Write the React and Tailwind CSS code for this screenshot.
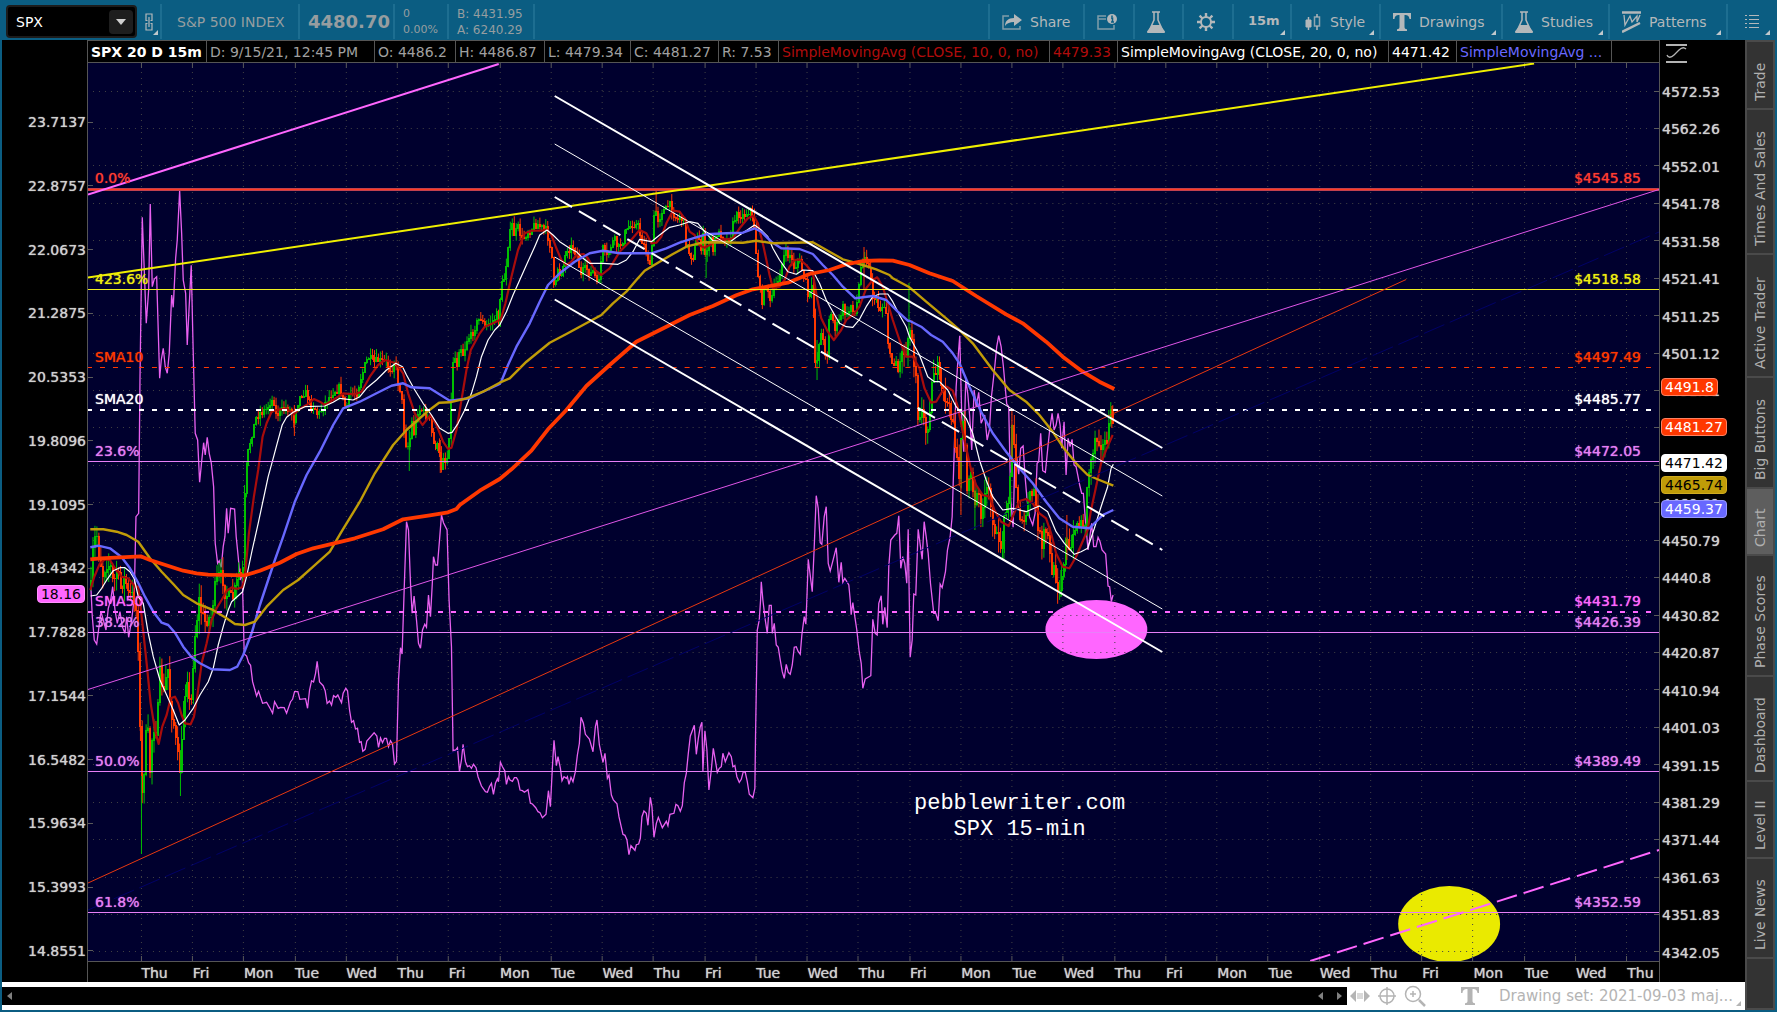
// Plot area in chart units
const PLOT = { x: 88, y: 63, w: 1572, h: 898 }

// Series are recorded in panes: [originX, originY, x, y, x, y, ...], three steps to a chart unit
const toPoints = panes =>
  panes.flatMap(([ox, oy, ...v]) => {
    const out = []
    for (let i = 0; i < v.length; i += 2) out.push([ox + v[i] / 3, oy + v[i + 1] / 3])
    return out
  })

const toLine = panes => toPoints(panes).map(([x, y]) => `${x.toFixed(1)},${y.toFixed(1)}`).join(' ')

const VIX = [
  [0, 580, 272, 10, 277, 110, 283, 180, 290, 192, 297, 140, 303, 95, 310, 120, 318, 150, 325, 85, 332, 60, 338, 20, 345, 90, 352, 130, 360, 95, 367, 140, 375, 160, 380, 110, 386, 172, 395, 120, 402, 60],
  [0, 180, 404, 1190, 408, 1010, 416, 1000, 420, 600, 427, 112, 439, 430, 446, 330, 451, 72, 457, 320, 463, 297, 470, 290, 479, 595, 484, 540, 490, 505, 496, 560, 502, 580, 508, 520, 515, 345, 520, 382, 527, 235, 532, 180, 539, 32, 545, 160, 550, 300, 557, 340, 562, 495, 574, 256, 580, 520, 586, 760, 593, 780, 599, 907, 605, 845, 611, 788, 616, 825, 622, 772, 628, 820, 634, 848, 641, 920, 646, 1090, 653, 1150, 658, 1142, 664, 1162, 670, 1100, 675, 1070, 680, 985, 685, 1060, 692, 985, 704, 987, 709, 1070, 715, 1130, 721, 1200, 727, 1180, 729, 1260],
  [0, 580, 733, 222, 740, 228, 746, 248, 752, 256, 758, 305, 770, 348, 776, 334, 788, 370, 800, 367, 812, 388, 818, 400, 824, 365, 835, 385, 842, 382, 853, 383, 860, 400, 872, 365, 878, 358, 884, 335, 894, 335, 900, 358, 917, 356, 923, 385, 929, 330, 935, 302, 941, 306, 947, 280, 952, 244, 959, 306, 970, 317, 976, 332, 982, 370, 989, 363, 995, 375, 1001, 347, 1008, 352, 1014, 345, 1019, 356, 1025, 368, 1030, 340, 1038, 325, 1043, 332, 1049, 390, 1055, 427, 1061, 422, 1067, 447, 1073, 445, 1079, 487, 1084, 485, 1089, 514, 1096, 508, 1101, 483, 1123, 458, 1131, 468, 1136, 502, 1142, 474, 1148, 488, 1154, 475, 1160, 475, 1166, 500, 1172, 482, 1178, 492, 1184, 552, 1190, 543, 1196, 300, 1202, 203, 1207, 222, 1214, 0],
  [0, 180, 1220, 1025, 1226, 1050, 1231, 1180],
  [0, 580, 1232, 10, 1237, 100, 1243, 48, 1250, 120, 1256, 190, 1262, 205, 1268, 150, 1275, 133, 1280, 142, 1286, 45, 1292, 110, 1298, 0],
  [0, 180, 1301, 1130, 1307, 1155, 1313, 1155, 1320, 1070, 1325, 1005, 1331, 1028, 1342, 1050, 1348, 1260],
  [400, 600, 155, 140, 160, 452, 168, 450, 173, 443, 179, 515, 185, 480, 190, 433, 197, 485, 203, 500, 209, 497, 215, 505, 221, 493, 229, 503, 235, 530, 245, 558, 257, 575, 263, 577, 269, 560, 275, 550, 281, 583, 287, 550, 293, 536, 296, 545, 302, 487, 308, 500, 315, 512, 320, 553, 326, 530, 331, 540, 338, 544, 344, 533, 350, 533, 355, 541, 361, 570, 368, 572, 374, 577, 385, 569, 392, 610, 398, 612, 408, 623, 415, 635, 421, 638, 428, 653, 439, 643, 446, 572, 452, 620, 458, 500, 463, 421, 470, 497, 475, 470, 482, 505, 487, 542, 493, 530, 500, 535, 503, 530, 508, 553, 514, 532, 520, 545, 527, 515, 533, 465, 539, 430, 544, 352, 551, 370, 557, 403, 569, 417, 580, 455, 587, 380, 592, 360, 599, 435, 610, 487, 616, 460, 623, 535, 628, 525, 635, 585, 641, 600, 652, 611, 658, 650, 670, 703, 676, 706, 682, 720, 688, 764, 694, 737, 706, 751, 710, 734, 717, 732, 722, 715, 727, 650, 733, 633, 740, 640, 745, 676, 752, 592, 757, 620, 763, 712, 770, 670, 776, 652, 788, 683, 800, 664, 805, 677, 811, 643, 823, 640, 829, 613, 835, 617, 842, 634, 848, 617, 854, 548, 860, 520, 866, 460, 872, 408, 878, 392, 884, 376, 890, 463, 896, 415, 902, 380, 907, 367, 910, 513, 916, 392, 922, 450, 928, 570, 935, 510, 941, 445, 947, 480, 953, 517, 959, 505, 965, 500, 970, 460, 977, 485, 988, 458, 995, 470, 1000, 500, 1006, 497, 1012, 530, 1019, 547, 1025, 538, 1031, 515, 1037, 517, 1043, 545, 1049, 583, 1060, 593, 1066, 565, 1068, 400, 1073, 90, 1079, 60, 1083, 0],
  [460, 180, 905, 1205, 910, 1260],
  [400, 600, 1097, 60, 1103, 100, 1109, 16, 1115, 16, 1118, 100, 1124, 70, 1130, 135, 1136, 142, 1142, 180, 1148, 215, 1154, 235, 1160, 193, 1166, 217, 1172, 223, 1178, 195, 1184, 142, 1190, 140, 1196, 155, 1202, 163, 1207, 105, 1214, 50, 1219, 72, 1222, 0],
  [460, 180, 1046, 1138, 1058, 1235, 1064, 1100, 1070, 947, 1076, 985, 1082, 1088, 1087, 1093, 1094, 1010, 1100, 980, 1106, 1150, 1112, 1173, 1118, 1150, 1130, 1103, 1138, 1207, 1145, 1147, 1150, 1207, 1156, 1195, 1168, 1215, 1172, 1260],
  [400, 600, 1355, 44, 1360, 8, 1366, 50, 1372, 90, 1379, 155, 1385, 190, 1390, 265, 1397, 237, 1414, 227, 1420, 58],
  [860, 200, 47, 1300, 53, 1305, 58, 1210, 65, 1187, 70, 1273, 76, 1222, 83, 1283, 88, 1100, 94, 1020, 106, 1005, 112, 1000, 118, 947, 124, 1105, 130, 1070, 136, 1090, 142, 1150, 146, 988, 152, 1372, 158, 1320, 163, 1182, 169, 1185, 176, 988, 188, 1078, 194, 965, 200, 1010, 206, 1060, 213, 1150, 223, 1240, 229, 1240, 236, 1262, 242, 1152, 248, 1163, 258, 1115, 264, 1050, 272, 1010, 278, 950, 284, 760, 290, 560, 296, 470, 301, 407, 307, 650, 313, 755, 319, 540, 325, 580, 331, 650, 337, 750, 344, 570, 350, 620, 358, 577, 365, 670, 376, 645, 383, 720, 390, 690, 396, 590, 405, 510, 412, 440, 418, 407, 425, 440, 432, 500, 442, 612, 448, 620, 454, 900, 461, 982, 466, 790, 472, 770, 478, 823, 484, 745, 491, 738, 497, 830, 503, 900, 510, 950, 520, 975, 527, 940, 533, 790, 538, 785, 544, 700, 550, 812, 558, 817, 566, 735, 571, 690, 578, 640, 584, 690, 590, 675, 596, 640, 602, 675, 607, 745, 614, 665, 620, 825, 626, 715, 632, 740, 638, 718, 644, 795, 650, 800, 656, 830, 661, 855, 667, 880, 672, 880, 678, 960, 686, 1050, 697, 970, 703, 1040, 710, 1040, 716, 1012, 722, 1025, 728, 1050, 739, 1062, 746, 1158, 751, 1160, 756, 1205, 761, 1185],
]

const SMA10 = [
  [0, 180, 271, 1230, 283, 1190, 300, 1150, 315, 1138, 330, 1140, 345, 1165, 365, 1190, 385, 1195, 405, 1220],
  [0, 580, 415, 20, 425, 110, 440, 250, 452, 370, 465, 450, 476, 492, 487, 440, 500, 405, 512, 355, 525, 350, 535, 370, 545, 405, 555, 430, 572, 433, 582, 410, 592, 350, 605, 250, 620, 190, 635, 120, 650, 85, 665, 60, 680, 33, 695, 22, 710, 27, 727, 22],
  [0, 180, 735, 1190, 747, 1060, 762, 950, 775, 870, 788, 770, 800, 730, 815, 695, 830, 690, 860, 685, 883, 703, 895, 690, 920, 675, 942, 657, 960, 665, 975, 675, 1000, 660, 1030, 640, 1065, 643, 1085, 635, 1110, 590, 1135, 555, 1155, 540, 1188, 550, 1210, 580, 1225, 640, 1245, 700, 1268, 735, 1292, 705, 1310, 735, 1330, 785, 1345, 807, 1355, 803, 1370, 750, 1385, 660, 1400, 570, 1413, 510, 1440, 460, 1455, 440, 1480, 430, 1500, 420],
  [460, 180, 122, 422, 137, 370, 155, 290, 175, 210, 195, 160, 215, 152, 245, 152, 262, 148, 275, 165, 290, 205, 305, 240, 320, 255, 335, 245, 350, 225, 372, 222, 385, 235, 405, 270, 425, 285, 450, 265, 480, 215, 510, 185, 540, 150, 560, 160, 575, 190, 590, 188, 605, 170, 620, 130, 640, 92, 660, 95, 675, 115, 690, 155, 705, 165, 718, 195, 735, 203, 750, 195, 775, 178, 800, 178, 820, 175, 840, 145, 865, 115, 882, 107, 895, 130, 912, 200, 930, 285, 940, 325, 960, 320, 975, 300, 990, 260, 1005, 240, 1020, 238, 1040, 255, 1060, 280, 1072, 350, 1085, 415, 1105, 455, 1123, 480, 1145, 450, 1160, 420, 1185, 400, 1200, 380, 1220, 325, 1240, 300, 1253, 292, 1270, 320, 1285, 370, 1300, 420, 1320, 480, 1340, 530, 1360, 530],
  [860, 200, 180, 505, 195, 565, 215, 608, 230, 605, 245, 580, 262, 560, 280, 572, 295, 620, 315, 720, 335, 810, 350, 855, 370, 885, 390, 890, 405, 930, 425, 965, 448, 978, 462, 945, 480, 903, 500, 897, 520, 910, 540, 940, 560, 955, 575, 1000, 590, 1060, 610, 1100, 630, 1105, 650, 1070, 665, 1035, 685, 990, 695, 930, 710, 860, 725, 790, 740, 750, 760, 705],
]

const SMA20 = [
  [0, 180, 272, 1248, 290, 1245, 305, 1225, 320, 1200, 340, 1172, 360, 1163, 375, 1163, 390, 1175, 403, 1197, 415, 1250],
  [0, 580, 430, 70, 445, 160, 460, 230, 480, 300, 500, 345, 520, 390, 538, 435, 555, 420, 580, 385, 600, 345, 625, 305, 640, 265, 655, 195, 670, 140, 685, 90, 695, 65, 728, 35],
  [0, 180, 740, 1190, 757, 1110, 775, 1030, 790, 960, 805, 890, 820, 835, 832, 790, 847, 735, 860, 712, 880, 697, 915, 680, 975, 678, 1000, 667, 1020, 655, 1060, 660, 1080, 650, 1100, 625, 1130, 600, 1160, 570, 1188, 550, 1208, 560, 1220, 585, 1245, 630, 1270, 670, 1295, 705, 1320, 745, 1345, 760, 1357, 757, 1375, 730, 1395, 690, 1415, 640, 1430, 590, 1445, 530, 1465, 480, 1485, 450],
  [460, 180, 120, 435, 140, 395, 160, 345, 180, 300, 200, 255, 225, 200, 240, 165, 262, 150, 280, 165, 300, 185, 330, 205, 350, 215, 370, 235, 390, 250, 430, 250, 475, 253, 500, 240, 520, 215, 540, 178, 575, 185, 600, 165, 630, 142, 660, 135, 690, 125, 715, 130, 735, 155, 760, 182, 810, 187, 830, 172, 855, 155, 885, 135, 905, 150, 925, 170, 940, 205, 960, 240, 985, 275, 1010, 283, 1030, 270, 1060, 272, 1080, 310, 1100, 360, 1120, 395, 1140, 430, 1160, 440, 1180, 442, 1200, 418, 1220, 380, 1240, 350, 1260, 342, 1285, 342, 1300, 365, 1320, 405, 1340, 440, 1350, 470],
  [860, 200, 180, 465, 205, 530, 225, 545, 240, 545, 265, 570, 290, 620, 320, 655, 340, 700, 360, 780, 380, 840, 400, 890, 430, 930, 460, 925, 500, 935, 540, 918, 565, 935, 590, 995, 615, 1030, 645, 1063, 665, 1055, 685, 1045, 705, 985, 725, 920, 745, 860, 755, 805, 762, 793],
]

const SMA50 = [
  [0, 180, 271, 1102, 295, 1097, 330, 1105, 365, 1132, 390, 1165, 410, 1200],
  [0, 580, 418, 15, 435, 50, 460, 95, 485, 128, 505, 135, 525, 158, 550, 200, 575, 232, 600, 250, 635, 268, 690, 270, 712, 260, 730, 225, 755, 160, 780, 75, 805, 0],
  [0, 180, 825, 1140, 850, 1070, 885, 965, 920, 885, 960, 815, 1000, 735, 1030, 685, 1080, 665, 1130, 640, 1175, 617, 1210, 610, 1235, 622, 1290, 625, 1350, 662, 1410, 655, 1450, 635, 1500, 612],
  [460, 180, 125, 603, 145, 555, 170, 500, 210, 430, 240, 365, 265, 315, 300, 280, 345, 245, 390, 220, 430, 212, 480, 220, 575, 220, 620, 205, 660, 188, 700, 175, 740, 163, 800, 160, 850, 158, 885, 145, 905, 155, 935, 185, 965, 205, 1020, 207, 1060, 222, 1090, 255, 1120, 285, 1150, 320, 1187, 355, 1240, 348, 1280, 360, 1315, 395, 1345, 422],
  [860, 200, 150, 362, 185, 380, 215, 405, 250, 425, 280, 460, 300, 490, 330, 560, 365, 635, 400, 700, 440, 755, 480, 805, 520, 850, 560, 905, 600, 955, 640, 980, 690, 985, 730, 945, 762, 930],
]

const SMA100 = [
  [0, 180, 271, 1048, 310, 1048, 350, 1055, 380, 1065, 415, 1085, 450, 1135, 485, 1175],
  [0, 580, 520, 12, 550, 45, 590, 70, 635, 88, 680, 115, 705, 132, 735, 135, 765, 125, 800, 80, 850, 30, 895, 0],
  [0, 180, 940, 1160, 990, 1115, 1025, 1055, 1080, 965, 1125, 880, 1180, 795, 1220, 750, 1280, 697, 1318, 668, 1350, 667, 1400, 655, 1450, 635, 1500, 608],
  [460, 180, 150, 595, 200, 545, 270, 488, 320, 462, 370, 435, 425, 405, 460, 370, 500, 335, 530, 300, 555, 272, 600, 245, 640, 222, 680, 200, 730, 187, 850, 188, 890, 182, 940, 190, 1060, 187, 1110, 215, 1150, 238, 1200, 252, 1250, 268, 1290, 285],
  [860, 200, 100, 235, 150, 262, 200, 305, 260, 355, 300, 390, 340, 430, 400, 510, 450, 570, 500, 605, 540, 645, 580, 695, 610, 740, 650, 790, 685, 825, 720, 840, 762, 857],
]

const SMA200 = [
  [0, 180, 271, 1138, 300, 1135, 422, 1129, 450, 1140, 550, 1172, 590, 1180, 625, 1184, 735, 1186, 780, 1172, 840, 1148, 890, 1122, 940, 1105, 1065, 1075, 1150, 1048, 1210, 1018, 1290, 1006, 1345, 997, 1370, 987],
  [460, 180, 0, 975, 60, 932, 120, 897, 155, 868, 215, 812, 265, 748, 320, 690, 380, 618, 450, 555, 530, 485, 620, 440, 690, 405, 760, 378, 830, 346, 880, 328, 985, 308, 1050, 282, 1110, 270, 1160, 253, 1210, 243, 1260, 241],
  [860, 200, 100, 182, 150, 195, 210, 220, 280, 243, 350, 288, 440, 343, 490, 370, 560, 425, 610, 470, 670, 515, 720, 545, 765, 567],
]

const PRICE = [
  [0, 180, 272, 1240, 278, 1120, 285, 1075, 290, 1060, 297, 1120, 308, 1180, 320, 1150, 332, 1160, 340, 1215, 350, 1170, 362, 1220, 376, 1190, 385, 1240, 400, 1250],
  [0, 580, 408, 60, 412, 180, 418, 210, 421, 470, 425, 640, 430, 650, 434, 520, 440, 450, 447, 470, 452, 620, 457, 450, 466, 430, 472, 480, 476, 290, 482, 270, 490, 350, 497, 300, 504, 265, 512, 400, 518, 400, 525, 470, 530, 500, 537, 570, 542, 560, 548, 420, 557, 330, 565, 270, 571, 430, 578, 290, 584, 180, 590, 130, 598, 60, 606, 100, 615, 125, 625, 110, 632, 120, 640, 60, 648, 5],
  [0, 180, 658, 1185, 668, 1190, 675, 1235, 685, 1250, 697, 1255, 708, 1220, 718, 1170, 727, 1200, 731, 1080, 735, 900, 745, 820, 755, 770, 770, 710, 785, 695, 800, 685, 812, 665, 822, 655, 826, 705, 840, 695, 860, 680, 875, 695, 882, 720, 886, 690, 895, 660, 908, 635, 920, 640, 930, 670, 945, 680, 955, 705, 970, 680, 980, 660, 1000, 635, 1020, 622, 1033, 670, 1040, 680, 1050, 640, 1070, 640, 1080, 600, 1095, 555, 1105, 530, 1120, 545, 1140, 540, 1160, 545, 1175, 570, 1186, 535, 1193, 600, 1205, 640, 1212, 740, 1218, 790, 1228, 800, 1235, 720, 1243, 760, 1255, 685, 1268, 690, 1280, 710, 1290, 720, 1300, 790, 1315, 800, 1325, 860, 1332, 820, 1340, 860, 1345, 810, 1352, 720, 1360, 540, 1366, 530, 1371, 560, 1380, 490, 1392, 525, 1400, 480, 1415, 465, 1430, 430, 1442, 410, 1455, 440, 1465, 430, 1480, 420],
  [460, 180, 112, 400, 117, 430, 120, 370, 130, 300, 138, 290, 142, 210, 150, 170, 157, 130, 165, 165, 175, 140, 188, 180, 200, 160, 215, 145, 230, 130, 245, 140, 258, 150, 268, 185, 275, 215, 280, 310, 285, 340, 292, 260, 300, 280, 312, 255, 322, 205, 342, 200, 355, 230, 363, 290, 372, 270, 382, 265, 392, 280, 402, 270, 412, 315, 420, 280, 428, 200, 440, 235, 455, 190, 465, 180, 475, 205, 490, 175, 505, 145, 520, 130, 535, 135, 545, 175, 555, 200, 565, 230, 573, 270, 580, 150, 586, 80, 597, 125, 605, 90, 617, 90, 628, 70, 640, 95, 652, 120, 662, 105, 672, 130, 678, 185, 690, 215, 700, 235, 710, 190, 717, 165, 725, 200, 733, 160, 737, 230, 745, 200, 752, 165, 760, 215, 770, 160, 785, 160, 800, 185, 815, 160, 822, 120, 835, 100, 850, 105, 865, 95, 872, 85, 880, 115, 888, 150, 892, 250, 900, 310, 905, 370, 912, 350, 922, 300, 932, 370, 942, 330, 952, 310, 962, 275, 975, 220, 992, 225, 1005, 265, 1018, 235, 1030, 285, 1040, 310, 1046, 360, 1055, 320, 1060, 340, 1068, 540, 1074, 540, 1083, 450, 1093, 490, 1102, 545, 1110, 400, 1118, 410, 1128, 445, 1140, 420, 1150, 380, 1162, 410, 1175, 370, 1187, 400, 1195, 350, 1200, 290, 1208, 230, 1217, 220, 1227, 265, 1237, 300, 1241, 385, 1250, 350, 1262, 390, 1273, 370, 1283, 400, 1288, 520, 1300, 550, 1310, 540, 1318, 580, 1328, 500, 1338, 540, 1346, 450, 1356, 460, 1365, 560, 1375, 590],
  [860, 200, 175, 640, 190, 630, 197, 700, 207, 660, 213, 590, 222, 510, 235, 505, 242, 555, 255, 580, 270, 630, 280, 640, 285, 700, 292, 780, 300, 850, 302, 930, 305, 700, 312, 650, 318, 760, 325, 890, 335, 800, 345, 930, 355, 870, 365, 940, 375, 900, 385, 860, 395, 930, 405, 980, 418, 1045, 430, 1010, 438, 930, 447, 890, 455, 800, 458, 680, 464, 720, 472, 880, 480, 930, 490, 990, 500, 940, 512, 890, 524, 870, 532, 950, 542, 1010, 548, 1060, 555, 980, 565, 1010, 575, 1110, 585, 1110, 598, 1170, 607, 1120, 615, 1060, 622, 1010, 630, 1060, 640, 1030, 648, 970, 658, 970, 670, 970, 680, 960, 685, 830, 697, 770, 708, 710, 720, 715, 730, 740, 742, 720, 752, 660, 758, 630, 762, 680],
]

// Long wicks: x, top, bottom, up/down
const SPIKES = [
  [141, 776, 854, true],
  [180, 750, 796, true],
  [140, 660, 741, false],
  [294, 405, 436, false],
  [409, 430, 471, true],
  [440, 440, 473, false],
  [656, 190, 212, false],
  [817, 340, 380, true],
  [706, 240, 278, true],
  [864, 247, 290, false],
  [909, 283, 330, true],
  [961, 440, 515, false],
  [975, 490, 530, true],
  [1004, 530, 559, true],
  [1012, 410, 460, false],
  [1061, 570, 597, true],
  [1067, 515, 560, false],
  [1112, 406, 428, false],
]

// Bars 1.97 units apart (26 per session), sampled along the price path
const buildCandles = () => {
  const pts = toPoints(PRICE)
  let seed = 7
  const rand = () => {
    seed = (seed * 16807) % 2147483647
    return seed / 2147483647
  }
  const at = x => {
    const i = pts.findIndex(p => p[0] >= x)
    if (i <= 0) return pts[i === 0 ? 0 : pts.length - 1][1]
    const [x0, y0] = pts[i - 1]
    const [x1, y1] = pts[i]
    return y0 + ((y1 - y0) * (x - x0)) / (x1 - x0 || 1)
  }
  const out = []
  let open = at(91)
  for (let x = 91; x < 1114.5; x += 1.97) {
    const range = x > 900 || x < 240 ? 14 : 8
    const close = at(x) + (rand() - 0.5) * range
    const top = Math.min(open, close)
    const bottom = Math.max(open, close)
    out.push({ x, up: close < open, top, bottom, high: top - rand() * range, low: bottom + rand() * range })
    open = close
  }
  return out
}
const CANDLES = buildCandles()

const PRICE_AXIS = [
  '4572.53', '4562.26', '4552.01', '4541.78', '4531.58', '4521.41', '4511.25', '4501.12',
  '4491.01', '4480.92', '4470.88', '4460.81', '4450.79', '4440.8', '4430.82', '4420.87',
  '4410.94', '4401.03', '4391.15', '4381.29', '4371.44', '4361.63', '4351.83', '4342.05',
]
const VIX_AXIS = [
  '23.7137', '22.8757', '22.0673', '21.2875', '20.5353', '19.8096', '19.1095',
  '18.4342', '17.7828', '17.1544', '16.5482', '15.9634', '15.3993', '14.8551',
]
const DAYS = 'Thu Fri Mon Tue Wed Thu Fri Mon Tue Wed Thu Fri Tue Wed Thu Fri Mon Tue Wed Thu Fri Mon Tue Wed Thu Fri Mon Tue Wed Thu'.split(' ')

const GRID_X = DAYS.map((_, i) => Math.floor(141.4 + i * 51.25) + 0.5)
const GRID_Y = PRICE_AXIS.map((_, i) => Math.floor(91 + i * 37.43) + 0.5)
const VIX_Y = VIX_AXIS.map((_, i) => Math.floor(122 + i * 63.75) + 0.5)

const LEVELS = [
  { y: 178, name: '0.0%', price: '$4545.85', color: 'text-[#ff3b30]' },
  { y: 279, name: '423.6%', price: '$4518.58', color: 'text-[#eeee10]' },
  { y: 357, name: 'SMA10', price: '$4497.49', color: 'text-[#ff3800]' },
  { y: 399, name: 'SMA20', price: '$4485.77', color: 'text-white' },
  { y: 451, name: '23.6%', price: '$4472.05', color: 'text-[#e57ff5]' },
  { y: 601, name: 'SMA50', price: '$4431.79', color: 'text-[#ff66ff]' },
  { y: 622, name: '38.2%', price: '$4426.39', color: 'text-[#e57ff5]' },
  { y: 761, name: '50.0%', price: '$4389.49', color: 'text-[#e57ff5]' },
  { y: 902, name: '61.8%', price: '$4352.59', color: 'text-[#e57ff5]' },
]

const BADGES = [
  { y: 387, text: '4491.8', style: 'border-[#ff8060] bg-[#ff3800] text-white' },
  { y: 427, text: '4481.27', style: 'border-[#ff8060] bg-[#ff3800] text-white' },
  { y: 463, text: '4471.42', style: 'border-white bg-white text-black' },
  { y: 485, text: '4465.74', style: 'border-[#d0ac20] bg-[#c09c08] text-black' },
  { y: 509, text: '4459.37', style: 'border-[#9898ff] bg-[#6868ff] text-white' },
]

const STUDY_CELLS = [
  { text: 'SPX 20 D 15m', style: 'w-[119px] font-bold text-white' },
  { text: 'D: 9/15/21, 12:45 PM', style: 'w-[168px] text-[#a0a0a0]' },
  { text: 'O: 4486.2', style: 'w-[81px] text-[#a0a0a0]' },
  { text: 'H: 4486.87', style: 'w-[89px] text-[#a0a0a0]' },
  { text: 'L: 4479.34', style: 'w-[86px] text-[#a0a0a0]' },
  { text: 'C: 4481.27', style: 'w-[88px] text-[#a0a0a0]' },
  { text: 'R: 7.53', style: 'w-[60px] text-[#a0a0a0]' },
  { text: 'SimpleMovingAvg (CLOSE, 10, 0, no)', style: 'w-[271px] text-[#b00c0c]' },
  { text: '4479.33', style: 'w-[68px] text-[#b00c0c]' },
  { text: 'SimpleMovingAvg (CLOSE, 20, 0, no)', style: 'w-[271px] text-white' },
  { text: '4471.42', style: 'w-[68px] text-white' },
  { text: 'SimpleMovingAvg ...', style: 'w-[155px] text-[#6868ff]' },
]

const TABS = [
  { text: 'Trade', style: 'h-[66px]' },
  { text: 'Times And Sales', style: 'h-[143px]' },
  { text: 'Active Trader', style: 'h-[121px]' },
  { text: 'Big Buttons', style: 'h-[109px]' },
  { text: 'Chart', style: 'h-[65px]', active: true },
  { text: 'Phase Scores', style: 'h-[119px]' },
  { text: 'Dashboard', style: 'h-[103px]' },
  { text: 'Level II', style: 'h-[75px]' },
  { text: 'Live News', style: 'h-[98px]' },
]

const pctY = y => `${((y - PLOT.y) / PLOT.h) * 100}%`

// ── ICONS ────────────────────────────────────────────────────────────────────
const ShareIcon = () => (
  <svg width="20" height="18" viewBox="0 0 20 18" fill="none">
    <path d="M7 3H1v13h17v-3" stroke="currentColor" strokeWidth="1.5" opacity="0.7" />
    <path d="M3 13c0-5 3-8 9-8V1l8 6-8 6V9c-4 0-7 1-9 4z" fill="currentColor" />
  </svg>
)

const InfoIcon = () => (
  <svg width="20" height="18" viewBox="0 0 20 18" fill="none">
    <path d="M9 3H1v13h16v-4M1 6h8" stroke="currentColor" strokeWidth="1.5" opacity="0.7" />
    <circle cx="15" cy="6" r="5" fill="currentColor" />
    <path d="M14 5h1.5v4M14 9h3M15 2.5v1.5" stroke="#0b5d82" strokeWidth="1.5" />
  </svg>
)

const FlaskIcon = () => (
  <svg width="18" height="22" viewBox="0 0 18 22" fill="none">
    <path d="M5 1h8M7 1v8L2 20M11 1v8l5 11" stroke="currentColor" strokeWidth="1.5" />
    <path d="M5 14h8l5 6.5c0 1-.5 1.5-1 1.5H1c-.5 0-1-.5-1-1.5z" fill="currentColor" />
  </svg>
)

const GearIcon = () => (
  <svg width="20" height="20" viewBox="0 0 20 20" fill="none" stroke="currentColor">
    <circle cx="10" cy="10" r="5" strokeWidth="2" />
    <path d="M10 1v4M10 15v4M1 10h4M15 10h4M3.6 3.6l2.9 2.9M13.5 13.5l2.9 2.9M3.6 16.4l2.9-2.9M13.5 6.5l2.9-2.9" strokeWidth="2.4" />
  </svg>
)

const CandlesIcon = () => (
  <svg width="18" height="18" viewBox="-1 0 18 18" fill="none" stroke="currentColor" strokeWidth="1.5">
    <path d="M3.5 4v13M12 1v3M12 13v4" />
    <path d="M1 7h5v7H1z" fill="currentColor" strokeWidth="1" />
    <path d="M9.5 4h5v9h-5z" opacity="0.8" />
  </svg>
)

const TextIcon = () => (
  <svg width="18" height="18" viewBox="0 0 18 18" fill="currentColor">
    <path d="M0 0h18v6h-1.5C16 3 15 2 11.5 2v11.5c0 2 .5 2.5 2.5 2.8V18H4v-1.7c2-.3 2.5-.8 2.5-2.8V2C3 2 2 3 1.5 6H0z" />
  </svg>
)

const PatternsIcon = () => (
  <svg width="19" height="22" viewBox="0 0 19 22" fill="none" stroke="currentColor">
    <path d="M0 1.5h19M0 21L18 12" strokeWidth="2.5" />
    <path d="M2 4l1 10 5-9 2 6 5-6v6l3-7" strokeWidth="1.3" />
  </svg>
)

const ListIcon = () => (
  <svg width="14" height="13" viewBox="0 0 14 13" stroke="currentColor" strokeWidth="1" shapeRendering="crispEdges">
    <path d="M0 .5h2M4 .5h10M0 4.500h2M4 4.500h10M0 8.500h2M4 8.500h10M0 12.500h2M4 12.500h10" />
  </svg>
)

const LinkIcon = () => (
  <svg width="8" height="18" viewBox="0 0 8 18" fill="none" stroke="currentColor" strokeWidth="1.2">
    <path d="M2.500 7.500H1V1h6v6.500H5.500M2.500 10.500H1V17h6v-6.500H5.500M4 4v10" />
  </svg>
)

const Corner = () => (
  <svg className="absolute right-[5px] bottom-1 text-[#c0c8cc]" width="5" height="5" viewBox="0 0 5 5">
    <path d="M5 0v5H0z" fill="currentColor" />
  </svg>
)

function ToolButton({ icon, label, title, width, corner, bold }) {
  return (
    <button
      type="button"
      aria-label={label ?? title}
      className={`relative flex shrink-0 items-center gap-2 border-l-2 border-[#1d6e91] ${width} ${bold ? 'pl-3.5 text-[13px] font-bold' : 'pl-3'}`}
    >
      {icon}
      {label && <span>{label}</span>}
      {corner && <Corner />}
    </button>
  )
}

function Toolbar() {
  return (
    <header className="flex h-10 shrink-0 items-stretch border-t-4 border-[#0b5d82] pb-px text-sm text-[#b4b8ba]">
      <div className="my-px ml-1 flex w-[131px] items-center rounded-sm border-2 border-[#1c1c1c] bg-black pr-0.5">
        <input aria-label="Symbol" defaultValue="SPX" className="w-0 flex-1 bg-transparent pl-2 text-sm text-white outline-none" />
        <button type="button" aria-label="Symbol list" className="flex h-6 w-6 items-center justify-center rounded-sm bg-[#1e1e1e]">
          <svg width="10" height="6" viewBox="0 0 10 6"><path d="M0 0h10L5 6z" fill="#d0d0d0" /></svg>
        </button>
      </div>
      <button type="button" aria-label="Link symbol" className="relative flex w-[23px] items-center pl-2">
        <LinkIcon />
        <svg className="absolute right-0.5 bottom-1" width="5" height="5" viewBox="0 0 5 5"><path d="M5 0v5H0z" fill="#c0c8cc" /></svg>
      </button>
      <div className="flex w-[138px] items-center border-l-2 border-[#1d6e91] pl-[15px] whitespace-nowrap text-[#969da0]">S&amp;P 500 INDEX</div>
      <div className="flex w-[95px] items-center border-l-2 border-[#1d6e91] pl-2 text-lg font-bold text-[#969da0]">4480.70</div>
      <div className="flex w-[54px] flex-col justify-center border-l-2 border-[#1d6e91] pl-2 text-[11px] leading-4 text-[#969da0]">
        <span>0</span>
        <span>0.00%</span>
      </div>
      <div className="flex w-[86px] flex-col justify-center border-l-2 border-[#1d6e91] pl-2 text-xs leading-4 whitespace-nowrap text-[#969da0]">
        <span>B: 4431.95</span>
        <span>A: 6240.29</span>
      </div>
      <div className="flex flex-1 justify-end border-l-2 border-[#1d6e91]">
        <ToolButton icon={<ShareIcon />} label="Share" width="w-[95px]" />
        <ToolButton icon={<InfoIcon />} title="Event info" width="w-[50px]" />
        <ToolButton icon={<FlaskIcon />} title="Edit studies" width="w-[49px]" />
        <ToolButton icon={<GearIcon />} title="Settings" width="w-[50px]" />
        <ToolButton label="15m" width="w-[58px]" corner bold />
        <ToolButton icon={<CandlesIcon />} label="Style" width="w-[89px]" corner />
        <ToolButton icon={<TextIcon />} label="Drawings" width="w-[122px]" corner />
        <ToolButton icon={<FlaskIcon />} label="Studies" width="w-[107px]" corner />
        <ToolButton icon={<PatternsIcon />} label="Patterns" width="w-[118px]" corner />
        <ToolButton icon={<ListIcon />} title="Menu" width="w-[49px] pr-3 justify-center" corner />
      </div>
    </header>
  )
}

// ── PLOT ─────────────────────────────────────────────────────────────────────
function Plot() {
  const right = PLOT.x + PLOT.w
  const bottom = PLOT.y + PLOT.h
  return (
    <div className="relative min-h-0 flex-1 bg-[#00002e]">
      <svg className="absolute inset-0 h-full w-full" viewBox="88 63 1572 898" preserveAspectRatio="none" fill="none">
        <ellipse cx="1097" cy="629.5" rx="51" ry="29.5" fill="#ff66ff" />
        <ellipse cx="1450" cy="924" rx="51" ry="38" fill="#eaea00" />

        {/* grid */}
        <g stroke="#404044" shapeRendering="crispEdges">
          {GRID_Y.map(y => <path key={y} d={`M93 ${y}H1650`} strokeDasharray="1 5" />)}
          {GRID_X.map(x => <path key={x} d={`M${x} 72V956`} strokeDasharray="1 5" />)}
        </g>
        <g stroke="#5a5a5a" shapeRendering="crispEdges">
          {GRID_X.map(x => <path key={x} d={`M${x} 63v5M${x} ${bottom}v-5`} />)}
          {GRID_Y.map(y => <path key={y} d={`M${right} ${y}h-5`} />)}
          {VIX_Y.map(y => <path key={y} d={`M88 ${y}h5`} />)}
        </g>

        {/* volatility overlay */}
        <polyline points={toLine(VIX)} stroke="#e860f0" strokeWidth="1.3" />

        {/* bars */}
        <g shapeRendering="crispEdges">
          {CANDLES.map(c => (
            <g key={c.x} stroke={c.up ? '#00c000' : '#ff3800'}>
              <path d={`M${c.x} ${c.high}V${c.low}`} strokeWidth="1" />
              <path d={`M${c.x} ${c.top}V${c.bottom + 1}`} strokeWidth="2" />
            </g>
          ))}
          {SPIKES.map(([x, y0, y1, up]) => (
            <path key={x} d={`M${x + 0.5} ${y0}V${y1}`} stroke={up ? '#00c000' : '#ff3800'} />
          ))}
        </g>

        {/* moving averages */}
        <g strokeLinejoin="round">
          <polyline points={toLine(SMA10)} stroke="#a80c0c" strokeWidth="2.2" />
          <polyline points={toLine(SMA20)} stroke="#ffffff" strokeWidth="1.2" />
          <polyline points={toLine(SMA50)} stroke="#6868ff" strokeWidth="2.4" />
          <polyline points={toLine(SMA100)} stroke="#c09c08" strokeWidth="2.4" />
          <polyline points={toLine(SMA200)} stroke="#ff3800" strokeWidth="3.8" />
        </g>

        {/* levels */}
        <g shapeRendering="crispEdges">
          <path d={`M88 189.5H${right}`} stroke="#c04050" strokeWidth="3" />
          <path d={`M88 189.5H${right}`} stroke="#ff3b20" strokeWidth="1" />
          <path d={`M88 289.5H${right}`} stroke="#f0f020" />
          <path d="M88 367.5H1652" stroke="#ff3800" strokeDasharray="5 8" strokeDashoffset="1" />
          <path d="M88 410H1652" stroke="#ffffff" strokeWidth="2" strokeDasharray="5 8" strokeDashoffset="1" />
          <path d="M88 612H1652" stroke="#ff66ff" strokeWidth="2" strokeDasharray="5 8" strokeDashoffset="1" />
          <path d={`M88 461.5H${right}M88 632.5H${right}M88 771.5H${right}M88 912.5H${right}`} stroke="#e880f8" />
        </g>

        {/* trend lines */}
        <path d="M88 194.5L499 64" stroke="#ff66ff" strokeWidth="2" />
        <path d="M88 277.5L1535 63.5" stroke="#f0f000" strokeWidth="2" />
        <path d="M88 689.5L1660 189.5" stroke="#e055e8" />
        <path d="M88 883L1407 279.5" stroke="#e83810" />
        <path d="M88 910L1660 232" stroke="#000066" strokeDasharray="22 6" />
        <path d="M1311 961L1660 850" stroke="#ff66ff" strokeWidth="2" strokeDasharray="21 7" />

        {/* falling channel */}
        <g stroke="#ffffff">
          <path d="M555 96L1163 448M555 299.5L1163 652" strokeWidth="2" />
          <path d="M555 197L1163 550" strokeWidth="2" strokeDasharray="20 8" />
          <path d="M555 144L1163 496M555 257L1163 609" />
        </g>
      </svg>

      {LEVELS.map(l => (
        <div
          key={l.name}
          className={`absolute inset-x-0 -mt-2 flex justify-between pr-[18px] pl-[7px] leading-4 [text-shadow:0_0_1px_currentColor] ${l.color}`}
          style={{ top: pctY(l.y) }}
        >
          <span>{l.name}</span>
          <span>{l.price}</span>
        </div>
      ))}

      <p
        className="absolute left-[59.3%] -translate-x-1/2 text-center font-['Liberation_Mono',monospace] text-[22px] leading-[26px] whitespace-nowrap text-white"
        style={{ top: pctY(791) }}
      >
        pebblewriter.com
        <br />
        SPX 15-min
      </p>
    </div>
  )
}

function BottomBar() {
  return (
    <footer className="flex h-7 shrink-0 items-center bg-white text-[#b4b4b4]">
      <div className="flex h-[18px] flex-1 items-center justify-between bg-black px-[5px] text-[#808080]">
        <button type="button" aria-label="Scroll left"><svg width="5" height="8" viewBox="0 0 5 8"><path d="M5 0v8L0 4z" fill="currentColor" /></svg></button>
        <div className="flex gap-3.5">
          <button type="button" aria-label="Step left"><svg width="5" height="8" viewBox="0 0 5 8"><path d="M5 0v8L0 4z" fill="currentColor" /></svg></button>
          <button type="button" aria-label="Step right"><svg width="5" height="8" viewBox="0 0 5 8"><path d="M0 0v8l5-4z" fill="currentColor" /></svg></button>
        </div>
      </div>
      <div className="flex w-[398px] items-center pl-[3px]">
        <button type="button" aria-label="Fit width">
          <svg width="20" height="12" viewBox="0 0 20 12"><path d="M6 0v12L0 6zM14 0v12l6-6zM7.5 3h1v6h-1zM9.5 3h1v6h-1zM11.5 3h1v6h-1z" fill="currentColor" /></svg>
        </button>
        <button type="button" aria-label="Crosshair" className="ml-2">
          <svg width="18" height="18" viewBox="0 0 18 18" fill="none" stroke="currentColor" strokeWidth="1.5"><circle cx="9" cy="9" r="7" /><path d="M9 0v18M0 9h18" /></svg>
        </button>
        <button type="button" aria-label="Zoom" className="ml-2">
          <svg width="22" height="22" viewBox="0 0 22 22" fill="none" stroke="currentColor" strokeWidth="1.5"><circle cx="9" cy="9" r="7.5" /><path d="M6 9h6M9 6v6" /><path d="M15 15l6 6" strokeWidth="2.5" /></svg>
        </button>
        <button type="button" aria-label="Text" className="ml-[35px]"><TextIcon /></button>
        <button type="button" className="relative ml-5 flex-1 text-left text-[15px] leading-5 whitespace-nowrap">
          Drawing set: 2021-09-03 maj...
          <svg className="absolute right-1 bottom-0" width="5" height="5" viewBox="0 0 5 5"><path d="M5 0v5H0z" fill="currentColor" /></svg>
        </button>
      </div>
    </footer>
  )
}

export default function App() {
  return (
    <div className="flex h-screen min-h-[700px] flex-col overflow-hidden border-x-2 border-b-2 border-[#0b5d82] bg-[#0b5d82] font-['DejaVu_Sans',sans-serif] text-sm text-[#d0d0d0]">
      <Toolbar />

      <div className="flex min-h-0 flex-1">
        <main className="flex min-w-0 flex-1 flex-col">
          <div className="flex min-h-0 flex-1 bg-black">
            {/* volatility axis */}
            <div className="flex w-[86px] shrink-0 flex-col border-r border-[#555] pt-[23px] pb-[21px]">
              <div className="relative flex flex-1 flex-col items-end justify-between pt-[51px] pr-px pb-0.5 leading-4">
                {VIX_AXIS.map(v => <span key={v} className="[text-shadow:0_0_1px_currentColor]">{v}</span>)}
                <span
                  className="absolute right-0.5 -mt-[9px] rounded-sm border border-[#ff90ff] bg-[#ff66ff] px-[3px] leading-4 text-black"
                  style={{ top: pctY(594) }}
                >
                  18.16
                </span>
              </div>
            </div>

            <div className="flex min-w-0 flex-1 flex-col">
              <div className="flex h-[23px] shrink-0 overflow-hidden border-y border-[#555]">
                {STUDY_CELLS.map(c => (
                  <div key={c.text} className={`shrink-0 border-r border-[#555] pl-[3px] leading-[23px] whitespace-nowrap ${c.style}`}>
                    {c.text}
                  </div>
                ))}
              </div>
              <Plot />
              <div className="flex h-[21px] shrink-0 border-t border-[#555] pl-[3.4%] leading-[22px] [text-shadow:0_0_1px_currentColor]">
                {DAYS.map((d, i) => (
                  <span key={i} className={i === DAYS.length - 1 ? 'w-8' : 'min-w-0 flex-1'}>{d}</span>
                ))}
              </div>
            </div>

            {/* price axis */}
            <div className="flex w-[86px] shrink-0 flex-col border-l border-[#555] pb-[21px]">
              <button type="button" aria-label="Auto scale" className="h-[23px] pl-1.5 text-[#b4b4b4]">
                <svg width="21" height="22" viewBox="0 0 21 22" fill="none" stroke="currentColor">
                  <path d="M0 4h21M0 21h21" strokeWidth="2" />
                  <path d="M1 14c1 3 4 3 7 0l5-5c3-3 5-3 7-1" strokeWidth="1.3" />
                </svg>
              </button>
              <div className="relative flex flex-1 flex-col justify-between pt-[21px] pl-0.5 leading-4">
                {PRICE_AXIS.map(p => <span key={p} className="[text-shadow:0_0_1px_currentColor]">{p}</span>)}
                {BADGES.map(b => (
                  <span
                    key={b.text}
                    className={`absolute left-px -mt-[9px] rounded-sm border px-[3px] leading-4 ${b.style}`}
                    style={{ top: pctY(b.y) }}
                  >
                    {b.text}
                  </span>
                ))}
              </div>
            </div>
          </div>
          <BottomBar />
        </main>

        <nav className="flex w-[30px] shrink-0 flex-col gap-0.5 bg-[#4a4a4a] p-0.5">
          {TABS.map(t => (
            <button
              key={t.text}
              type="button"
              className={`flex shrink-0 rotate-180 items-center justify-start pt-[7px] leading-[26px] whitespace-nowrap text-[#b0b0b0] [writing-mode:vertical-rl] ${t.style} ${t.active ? 'bg-[#5e5e5e]' : 'bg-[#333]'}`}
            >
              {t.text}
            </button>
          ))}
          <div className="flex-1 bg-[#333]" />
        </nav>
      </div>
    </div>
  )
}
